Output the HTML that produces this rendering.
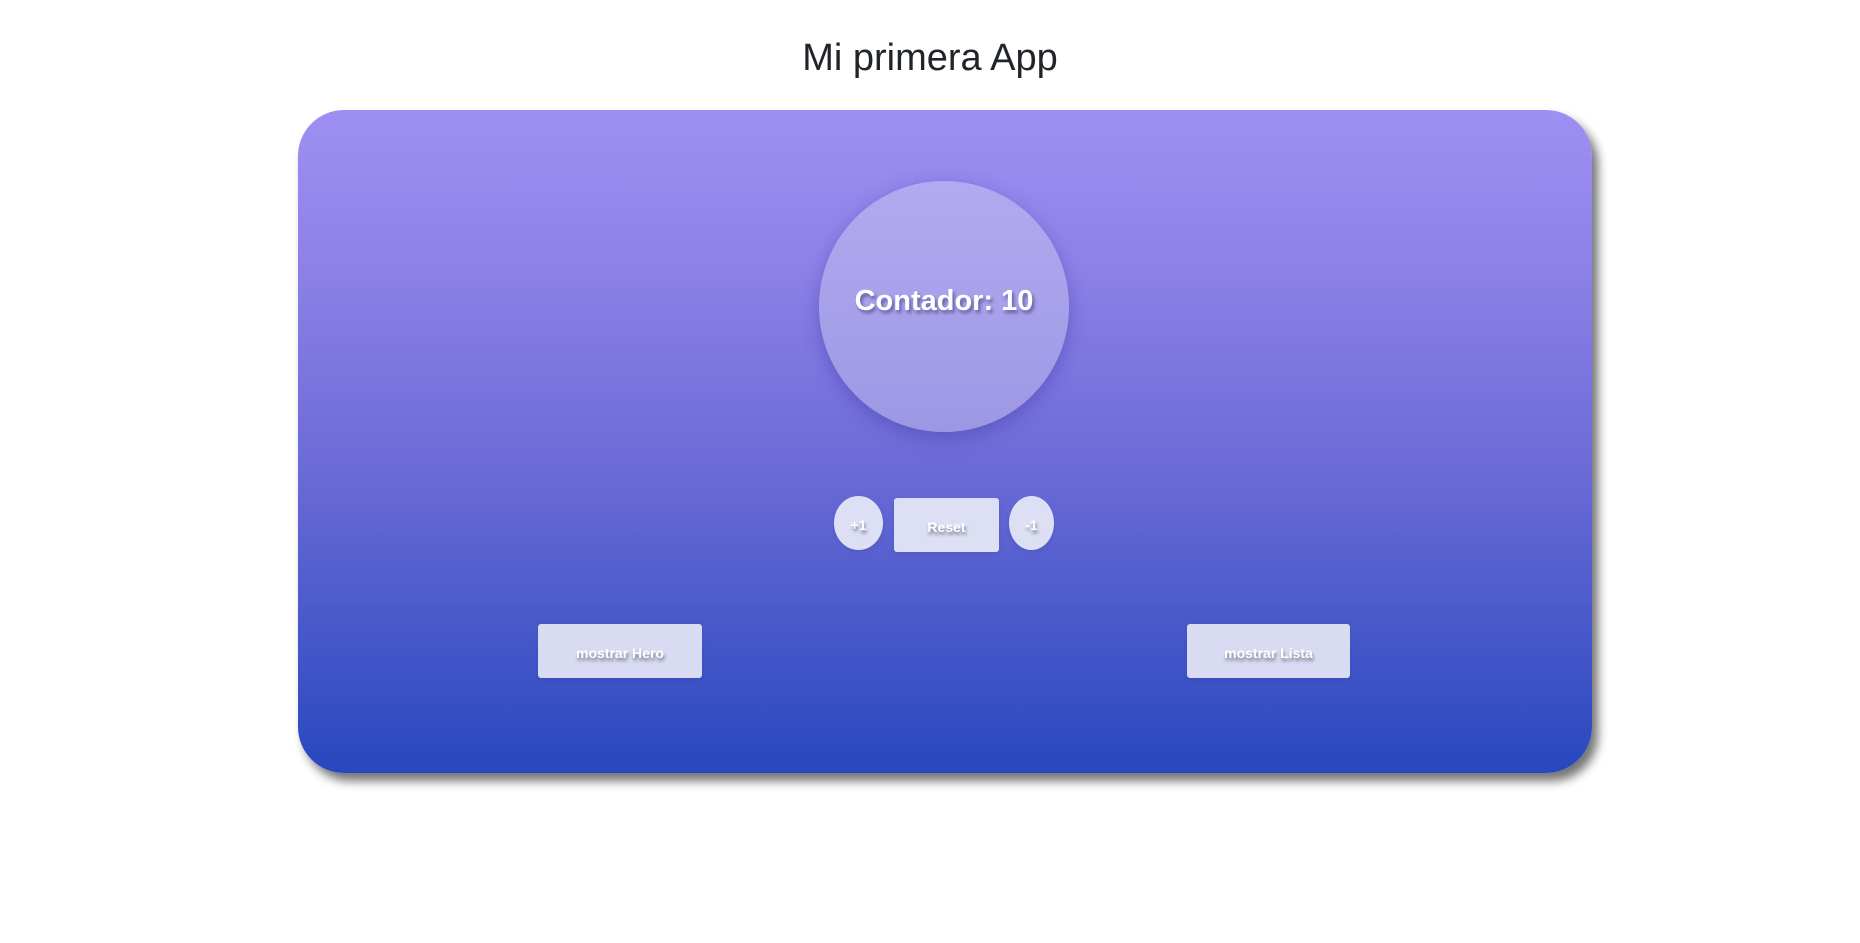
<!DOCTYPE html>
<html><head><meta charset="utf-8"><style>
html,body{margin:0;padding:0;background:#fff;width:1860px;height:943px;overflow:hidden;font-family:"Liberation Sans",sans-serif;}
h1{position:absolute;left:0;width:1860px;top:36px;margin:0;text-align:center;font-weight:normal;font-size:38px;line-height:44px;color:#212529;}
.card{position:absolute;left:298px;top:110px;width:1294px;height:663px;border-radius:46px;background:linear-gradient(to bottom,#9e90f2 0%,#8c80e6 25%,#6a6ad6 55%,#4557c9 80%,#2848bf 100%);box-shadow:6px 8px 10px rgba(0,0,0,0.55);}
.circle{position:absolute;left:521px;top:71px;width:250px;height:251px;border-radius:50%;background:linear-gradient(to bottom,#b2aaf0,#9d98e4);box-shadow:0 6px 18px rgba(60,50,160,0.4);}
.circle span{position:absolute;left:0;width:250px;top:104px;text-align:center;font-weight:bold;font-size:29px;color:#fff;text-shadow:2px 3px 3px rgba(60,50,120,0.6);}
.btn{position:absolute;background:#dde0f5;border-radius:3px;color:#fff;font-weight:bold;font-size:14px;text-align:center;text-shadow:1px 3px 3px rgba(0,0,0,0.45);box-shadow:0 2px 6px rgba(0,0,0,0.08);}
</style></head><body>
<h1>Mi primera App</h1>
<div class="card">
<div class="circle"><span>Contador: 10</span></div>
<div class="btn" style="left:536px;top:386px;width:49px;height:54px;line-height:58px;border-radius:50%">+1</div>
<div class="btn" style="left:596px;top:388px;width:105px;height:54px;line-height:58px">Reset</div>
<div class="btn" style="left:711px;top:386px;width:45px;height:54px;line-height:58px;border-radius:50%">-1</div>
<div class="btn" style="left:240px;top:514px;width:164px;height:54px;line-height:58px;background:#d8dbf2">mostrar Hero</div>
<div class="btn" style="left:889px;top:514px;width:163px;height:54px;line-height:58px;background:#d8dbf2">mostrar Lista</div>
</div>
</body></html>
